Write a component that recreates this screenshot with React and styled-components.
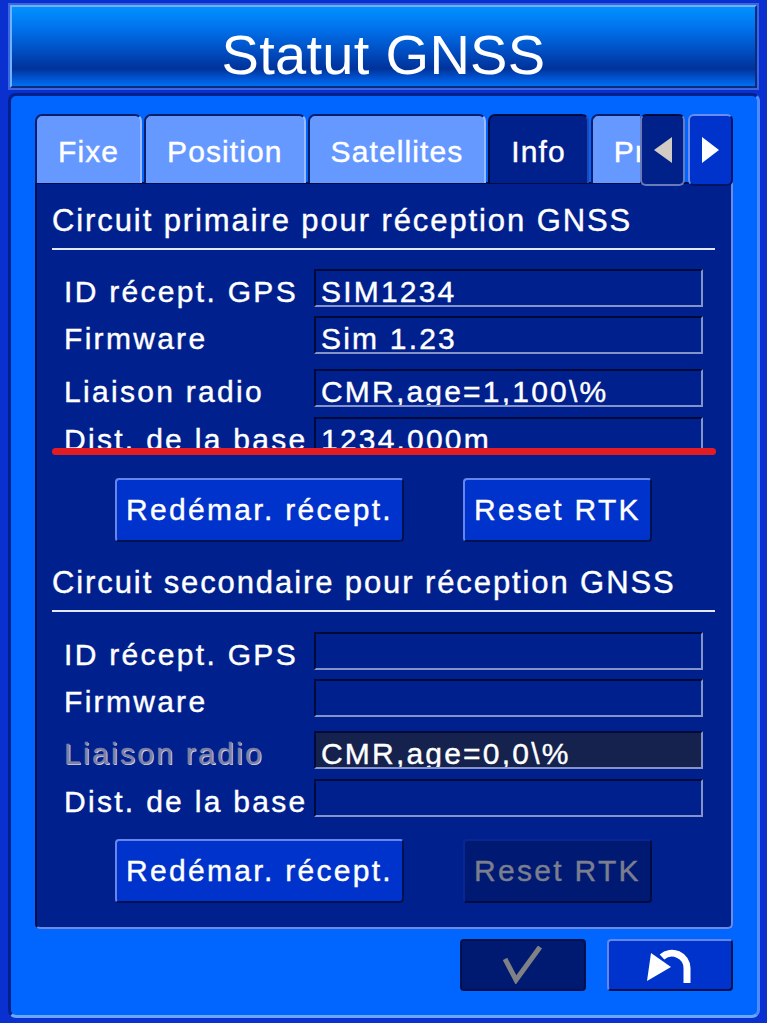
import React from 'react'
import styled, {createGlobalStyle} from 'styled-components'

const Global = createGlobalStyle`
  html, body {
    margin: 0;
    padding: 0;
    background: #0a30cf;
  }
  * {
    box-sizing: border-box;
  }
`

const Frame = styled.div`
  width: 767px;
  height: 1023px;
  padding: 5px 7px 5px 8px;
  display: flex;
  flex-direction: column;
  font-family: "Liberation Sans", Arial, sans-serif;
  color: #fff;
  -webkit-text-stroke: 0.4px;
  overflow: hidden;
`

const Header = styled.div`
  height: 83px;
  margin: 0 3px 5px 2px;
  padding-top: 12px;
  line-height: 71px;
  text-align: center;
  font-size: 56px;
  letter-spacing: 0.3px;
  -webkit-text-stroke: 0;
  background: linear-gradient(#0092ff 0%, #0074ee 25%, #004fc4 55%, #00329a 78%, #0058d8 92%, #0070f0 100%);
  border: 2px solid;
  border-color: #6fb0ff #0a2a80 #0a2a80 #6fb0ff;
  box-shadow: 0 0 0 2px #3a66e0;
`

const Main = styled.div`
  flex: 1;
  background: #0066ff;
  border-radius: 8px;
  border: 3px solid;
  border-color: #00208a #4d8cff #6aa8ff #00208a;
  padding: 18px 24px 0 24px;
  display: flex;
  flex-direction: column;
`

const TabBar = styled.div`
  display: flex;
  height: 69px;
  align-items: flex-start;
`

const TabStrip = styled.div`
  width: 605px;
  height: 69px;
  display: flex;
  gap: 2px;
  overflow: hidden;
  position: relative;
  z-index: 2;
`

const Tab = styled.div`
  flex-shrink: 0;
  height: ${p => (p.$active ? '71px' : '69px')};
  padding: 4px 21px 0;
  line-height: 63px;
  font-size: 30px;
  letter-spacing: 1.1px;
  white-space: nowrap;
  border-radius: 7px 7px 0 0;
  background: ${p => (p.$active ? '#00208c' : '#6699ff')};
  border: 2px solid;
  border-bottom: none;
  border-color: ${p => (p.$active ? '#000a40 #2a46a8 #2a46a8 #000a40' : '#0a1e6a #9cbaff #9cbaff #0a1e6a')};
`

const ArrowButton = styled.div`
  width: 45px;
  height: 72px;
  margin-left: ${p => (p.$first ? '0' : '3px')};
  display: flex;
  align-items: center;
  justify-content: center;
  border-radius: 6px;
  background: ${p => (p.$dim ? '#00208a' : '#0033cc')};
  border: 2px solid;
  border-color: ${p => (p.$dim ? '#000a40 #6b7ab8 #6b7ab8 #6b7ab8' : '#6a8cf0 #001466 #001466 #6a8cf0')};
  position: relative;
  z-index: 3;
`

const Panel = styled.div`
  height: 747px;
  margin-top: -1px;
  background: #00218d;
  border: 2px solid;
  border-color: #000c4a #6f8be0 #6f8be0 #000c4a;
  border-radius: 0 0 5px 5px;
  padding: 20px 16px 0 15px;
  position: relative;
  z-index: 1;
`

const SectionTitle = styled.div`
  margin-top: ${p => p.$top || 0}px;
  font-size: 31px;
  letter-spacing: 1.9px;
  line-height: 34px;
  padding-bottom: 10px;
  border-bottom: 2px solid #e4e8f4;
  white-space: nowrap;
`

const Row = styled.div`
  display: grid;
  grid-template-columns: 250px 389px;
  height: 38px;
  padding-left: 12px;
  margin-top: ${p => p.$top}px;
  position: relative;
`

const Label = styled.div`
  font-size: 30px;
  letter-spacing: 2.3px;
  line-height: 29px;
  padding-top: 8px;
  white-space: nowrap;
  color: ${p => (p.$off ? '#7e80a4' : '#fff')};
  text-shadow: ${p => (p.$off ? '1px 1px 0 #d6d8e6' : 'none')};
`

const Field = styled.div`
  height: 38px;
  padding: 6px 5px 0;
  font-size: 30px;
  letter-spacing: 2.2px;
  line-height: 29px;
  white-space: nowrap;
  overflow: hidden;
  background: ${p => (p.$off ? '#15224e' : '#00218d')};
  border: 2px solid;
  border-color: #000a38 #8493c8 #8493c8 #000a38;
`

const RedMark = styled.div`
  position: absolute;
  left: 0;
  right: -1px;
  top: 31px;
  height: 7px;
  border-radius: 4px;
  background: #e31c23;
`

const ButtonRow = styled.div`
  display: flex;
  justify-content: center;
  gap: 59px;
  margin-top: ${p => p.$top}px;
`

const Button = styled.div`
  height: 64px;
  padding: 0 9px;
  display: flex;
  align-items: center;
  font-size: 30px;
  letter-spacing: 2.3px;
  white-space: nowrap;
  border-radius: 4px;
  background: ${p => (p.$off ? '#001a74' : '#0033cc')};
  color: ${p => (p.$off ? '#7b7e8e' : '#fff')};
  border: 2px solid;
  border-color: ${p => (p.$off ? '#0a2690 #000c40 #000c40 #0a2690' : '#6686ee #00124e #00124e #6686ee')};
`

const BottomBar = styled.div`
  display: flex;
  justify-content: flex-end;
  gap: 21px;
  margin-top: 10px;
`

const ActionButton = styled.div`
  width: 126px;
  height: 52px;
  display: flex;
  align-items: center;
  justify-content: center;
  border-radius: 4px;
  background: ${p => (p.$off ? '#001a72' : '#0033cc')};
  border: 2px solid;
  border-color: ${p => (p.$off ? '#00104a' : '#6686ee #00124e #00124e #6686ee')};
`

const Triangle = ({dir, color}) => (
  <svg width="20" height="26" viewBox="0 0 20 26">
    {dir === 'left'
      ? <polygon points="19,0 19,26 1,13" fill={color} />
      : <polygon points="1,0 1,26 18,13" fill={color} />}
  </svg>
)

const CheckIcon = () => (
  <svg width="40" height="38" viewBox="0 0 40 38">
    <path d="M2 13 L13 34 L37 1" fill="none" stroke="#7f8184" strokeWidth="5" strokeLinejoin="miter" />
  </svg>
)

const UndoIcon = () => (
  <svg width="48" height="38" viewBox="0 0 48 38">
    <path d="M41 37 V22 A15 15 0 0 0 16 11" fill="none" stroke="#fff" strokeWidth="7" />
    <polygon points="1,35 5,7 25,21" fill="#fff" />
  </svg>
)

const primary = [
  {label: 'ID récept. GPS', value: 'SIM1234', top: 19},
  {label: 'Firmware', value: 'Sim 1.23', top: 9},
  {label: 'Liaison radio', value: 'CMR,age=1,100\\%', top: 15},
  {label: 'Dist. de la base', value: '1234.000m', top: 10, mark: true},
]

const secondary = [
  {label: 'ID récept. GPS', value: '', top: 20},
  {label: 'Firmware', value: '', top: 9},
  {label: 'Liaison radio', value: 'CMR,age=0,0\\%', top: 14, off: true},
  {label: 'Dist. de la base', value: '', top: 10},
]

const Rows = ({items}) =>
  items.map(item => (
    <Row key={item.label} $top={item.top}>
      <Label $off={item.off}>{item.label}</Label>
      <Field $off={item.off}>{item.value}</Field>
      {item.mark && <RedMark />}
    </Row>
  ))

const App = () => (
  <Frame>
    <Global />
    <Header>Statut GNSS</Header>
    <Main>
      <TabBar>
        <TabStrip>
          <Tab>Fixe</Tab>
          <Tab>Position</Tab>
          <Tab>Satellites</Tab>
          <Tab $active>Info</Tab>
          <Tab>Propriétés</Tab>
        </TabStrip>
        <ArrowButton $first $dim>
          <Triangle dir="left" color="#d2cdc4" />
        </ArrowButton>
        <ArrowButton>
          <Triangle dir="right" color="#fff" />
        </ArrowButton>
      </TabBar>
      <Panel>
        <SectionTitle>Circuit primaire pour réception GNSS</SectionTitle>
        <Rows items={primary} />
        <ButtonRow $top={23}>
          <Button>Redémar. récept.</Button>
          <Button>Reset RTK</Button>
        </ButtonRow>
        <SectionTitle $top={24}>Circuit secondaire pour réception GNSS</SectionTitle>
        <Rows items={secondary} />
        <ButtonRow $top={22}>
          <Button>Redémar. récept.</Button>
          <Button $off>Reset RTK</Button>
        </ButtonRow>
      </Panel>
      <BottomBar>
        <ActionButton $off>
          <CheckIcon />
        </ActionButton>
        <ActionButton>
          <UndoIcon />
        </ActionButton>
      </BottomBar>
    </Main>
  </Frame>
)

export default App
